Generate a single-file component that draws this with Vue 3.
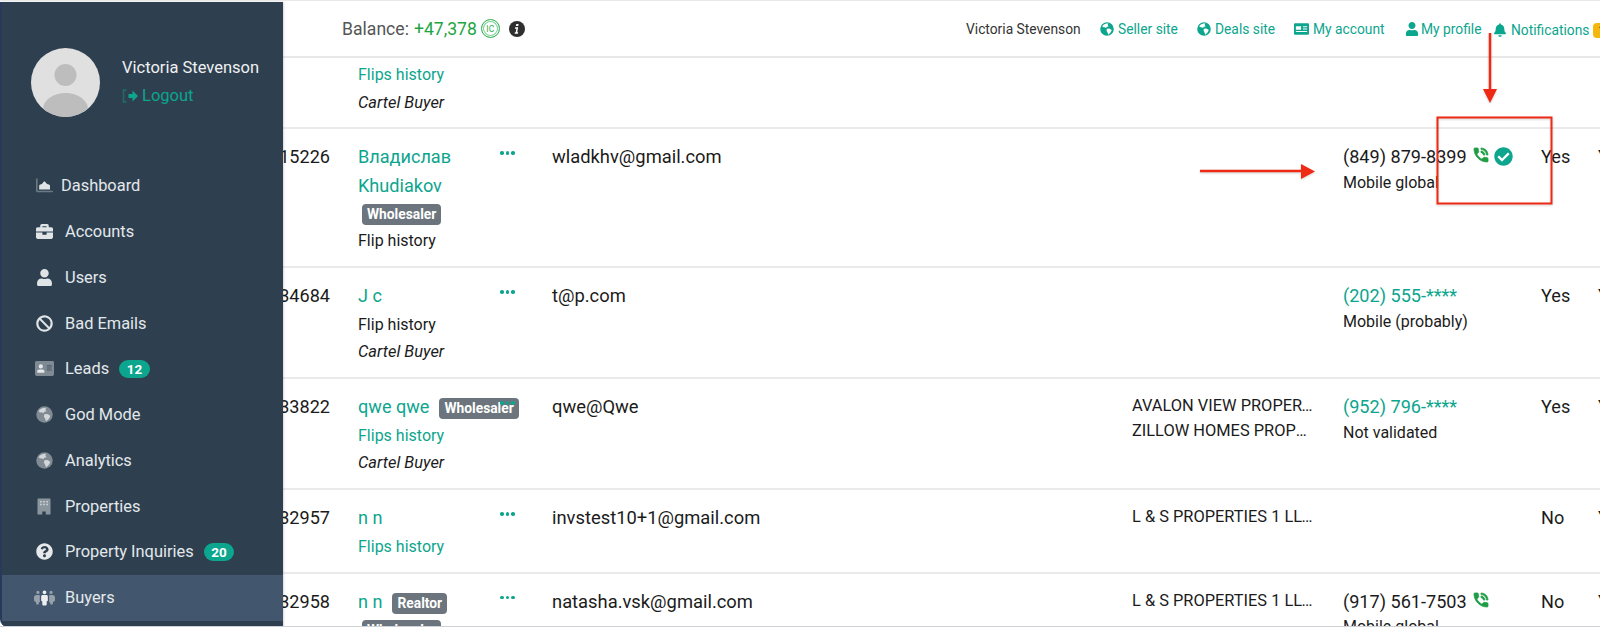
<script setup>
const DIM = '#7f8a93'
const BRIGHT = '#e0e4e7'
const landD = 'M110 115C160 70 240 45 305 58l-25 52 40 50-70 12-30 48-50-30-50 5-40-40zM250 250l90-10 90 50-30 80-60 60-40 40-20-80-40-70z'
const sideGlobe = { vb: '0 0 512 512', layers: [
  { d: 'M256 8a248 248 0 1 1 0 496 248 248 0 0 1 0-496z', c: DIM },
  { d: landD, c: '#d3d7da' }
] }
const linkGlobe = { vb: '0 0 512 512', fr: 'evenodd', d: 'M256 8a248 248 0 1 1 0 496 248 248 0 0 1 0-496z' + landD }
const user = { vb: '0 0 448 512', d: 'M224 256c70.7 0 128-57.3 128-128S294.7 0 224 0 96 57.3 96 128s57.3 128 128 128zm89.6 32h-16.7c-22.2 10.2-46.9 16-72.9 16s-50.6-5.8-72.9-16h-16.7C60.2 288 0 348.2 0 422.4V464c0 26.5 21.5 48 48 48h352c26.5 0 48-21.5 48-48v-41.6c0-74.2-60.2-134.4-134.4-134.4z' }

const nav = [
  { label: 'Dashboard', tight: true, icon: { vb: '0 0 512 440', layers: [
    { d: 'M0 24C0 11 11 0 24 0s24 11 24 24v352h440c13 0 24 11 24 24s-11 24-24 24H48c-26 0-48-22-48-48V24z', c: '#6d7a86' },
    { d: 'M96 340V230c0-20 14-36 34-42l50-16 52-66c10-12 30-12 40 0l60 66 56 18c20 6 34 24 34 44v106H96z', c: BRIGHT }
  ] } },
  { label: 'Accounts', icon: { vb: '0 0 512 512', layers: [{ c: BRIGHT, d: 'M320 336c0 8.840-7.160 16-16 16h-96c-8.840 0-16-7.160-16-16v-48H0v144c0 25.600 22.400 48 48 48h416c25.600 0 48-22.400 48-48V288H320v48zm144-208h-80V80c0-25.600-22.400-48-48-48H176c-25.600 0-48 22.400-48 48v48H48c-25.600 0-48 22.400-48 48v80h512v-80c0-25.600-22.400-48-48-48zm-144 0H192V96h128v32z' }] } },
  { label: 'Users', icon: { vb: user.vb, layers: [{ c: BRIGHT, d: user.d }] } },
  { label: 'Bad Emails', icon: { vb: '0 0 512 512', layers: [{ c: BRIGHT, d: 'M256 8C119 8 8 119 8 256s111 248 248 248 248-111 248-248S393 8 256 8zm130 116c65 65 70 166 17 237L151 109c71-53 172-48 235 15zM126 388c-65-65-70-166-17-237l252 252c-71 53-172 48-235-15z' }] } },
  { label: 'Leads', badge: '12', wide: true, icon: { vb: '0 0 576 448', layers: [
    { c: DIM, d: 'M48 0h480c26.500 0 48 21.500 48 48v352c0 26.500-21.500 48-48 48H48c-26.500 0-48-21.500-48-48V48C0 21.500 21.500 0 48 0z' },
    { c: '#e6e9eb', d: 'M176 96a64 64 0 1 1 0 128 64 64 0 0 1 0-128zM134 252h84c39 0 70 27 70 60v20c0 11-10 20-22 20H86c-12 0-22-9-22-20v-20c0-33 31-60 70-60z' },
    { c: '#49586a', d: 'M360 128h144v32H360zM360 192h144v32H360zM360 256h144v32H360z' }
  ] } },
  { label: 'God Mode', icon: sideGlobe },
  { label: 'Analytics', icon: sideGlobe },
  { label: 'Properties', small: true, icon: { vb: '0 0 448 512', layers: [
    { c: '#8b959d', d: 'M40 0h368c13 0 24 11 24 24v488H280v-88c0-7-5-12-12-12h-88c-7 0-12 5-12 12v88H16V24C16 11 27 0 40 0z' },
    { c: '#d5d9dc', d: 'M100 80h48v48h-48zM200 80h48v48h-48zM300 80h48v48h-48zM100 170h48v48h-48zM200 170h48v48h-48zM300 170h48v48h-48z' }
  ] } },
  { label: 'Property Inquiries', badge: '20', icon: { vb: '0 0 512 512', layers: [{ c: '#e6e8ea', d: 'M504 256c0 136.997-111.043 248-248 248S8 392.997 8 256C8 119.083 119.043 8 256 8s248 111.083 248 248zM262.655 90c-54.497 0-89.255 22.957-116.549 63.758-3.536 5.286-2.353 12.415 2.715 16.258l34.699 26.310c5.205 3.947 12.621 3.008 16.665-2.122 17.864-22.658 30.113-35.797 57.303-35.797 20.429 0 45.698 13.148 45.698 32.958 0 14.976-12.363 22.667-32.534 33.976C247.128 238.528 216 254.941 216 296v4c0 6.627 5.373 12 12 12h56c6.627 0 12-5.373 12-12v-1.333c0-28.462 83.186-29.647 83.186-106.667 0-58.002-60.165-102-116.531-102zM256 338c-25.365 0-46 20.635-46 46 0 25.364 20.635 46 46 46s46-20.636 46-46c0-25.365-20.635-46-46-46z' }] } },
  { label: 'Buyers', active: true, wider: true, icon: { vb: '0 0 640 512', layers: [
    { c: '#96a0a9', d: 'M120 50a50 50 0 1 1 0 100 50 50 0 0 1 0-100zm400 0a50 50 0 1 1 0 100 50 50 0 0 1 0-100zM76 176h78c18 0 28 10 26 26-1 10-2 16-2 26v130c0 14 4 26 10 36-8 6-18 10-30 10h-10v40c0 12-10 22-22 22H86c-12 0-22-10-22-22v-52C30 380 0 360 0 330v-74c0-44 34-80 76-80zm410 0h78c42 0 76 36 76 80v74c0 30-30 50-64 62v52c0 12-10 22-22 22h-40c-12 0-22-10-22-22v-40h-10c-12 0-22-4-30-10 6-10 10-22 10-36V228c0-10-1-16-2-26-2-16 8-26 26-26z' },
    { c: '#eceef0', d: 'M320 40a58 58 0 1 1 0 116 58 58 0 0 1 0-116zM262 180h116c24 0 44 20 44 44v120c0 14-10 24-24 24h-10v104c0 14-10 24-24 24h-88c-14 0-24-10-24-24V368h-10c-14 0-24-10-24-24V224c0-24 20-44 44-44z' }
  ] } }
]

const links = [
  { label: 'Seller site', icon: linkGlobe, cls: 'l-site' },
  { label: 'Deals site', icon: linkGlobe, cls: 'l-site' },
  { label: 'My account', icon: { vb: '0 0 576 448', fr: 'evenodd', d: 'M528 0H48C21.500 0 0 21.500 0 48v352c0 26.500 21.500 48 48 48h480c26.500 0 48-21.500 48-48V48c0-26.500-21.500-48-48-48zM72 120h200v130H72V120zm272 0h160v40H344v-40zm0 80h160v40H344v-40zM72 300h432v40H72v-40z' }, cls: 'l-acct' },
  { label: 'My profile', icon: user, cls: 'l-prof' }
]

const rows = [
  { id: '', lines: [{ t: 'Flips history', c: 'link' }, { t: 'Cartel Buyer', c: 'em' }], first: true },
  { id: '15226', name: 'Владислав Khudiakov', badges: [{ t: 'Wholesaler', c: 'under' }], lines: [{ t: 'Flip history' }], email: 'wladkhv@gmail.com', phone: '(849) 879-8399', call: true, ok: true, pnote: 'Mobile global', yes: 'Yes' },
  { id: '34684', name: 'J c', lines: [{ t: 'Flip history' }, { t: 'Cartel Buyer', c: 'em' }], email: 't@p.com', phone: '(202) 555-****', masked: true, pnote: 'Mobile (probably)', yes: 'Yes' },
  { id: '33822', name: 'qwe qwe', nowrap: true, badges: [{ t: 'Wholesaler', c: 'beside' }], lines: [{ t: 'Flips history', c: 'link' }, { t: 'Cartel Buyer', c: 'em' }], email: 'qwe@Qwe', companies: ['AVALON VIEW PROPERTIES LLC', 'ZILLOW HOMES PROPERTY LLC'], phone: '(952) 796-****', masked: true, pnote: 'Not validated', yes: 'Yes' },
  { id: '32957', name: 'n n', lines: [{ t: 'Flips history', c: 'link' }], email: 'invstest10+1@gmail.com', companies: ['L & S PROPERTIES 1 LLC INVEST'], yes: 'No' },
  { id: '32958', name: 'n n', badges: [{ t: 'Realtor', c: 'beside' }, { t: 'Wholesaler', c: 'under' }], lines: [], email: 'natasha.vsk@gmail.com', companies: ['L & S PROPERTIES 1 LLC INVEST'], phone: '(917) 561-7503', call: true, pnote: 'Mobile global', yes: 'No' }
]
</script>

<template>
  <div class="page">
    <main class="main">
      <header class="top">
        <div class="balance">
          <span>Balance:</span>
          <span class="amount">+47,378</span>
          <span class="coin"><span>IC</span></span>
          <svg class="info" viewBox="0 0 16 16"><circle cx="8" cy="8" r="8" fill="#2f2f2f" /><path d="M7.300 3h2.300l-.4 2.100H6.900zM6.200 6.300h3l-1 5h1l-.3 1.500H5.600l.3-1.500h.8l.7-3.500h-1.500z" fill="#fff" /></svg>
        </div>
        <nav class="toplinks">
          <span class="who">Victoria Stevenson</span>
          <a v-for="l in links" :key="l.label" class="tlink" :class="l.cls">
            <svg class="ticon" :viewBox="l.icon.vb"><path :d="l.icon.d" :fill-rule="l.icon.fr || 'nonzero'" fill="currentColor" /></svg>
            {{ l.label }}
          </a>
          <a class="tlink notif">
            <svg class="ticon bell" viewBox="0 0 448 512"><path fill="currentColor" d="M224 512c35.320 0 63.970-28.650 63.970-64H160.030c0 35.350 28.650 64 63.970 64zm215.390-149.710c-19.320-20.760-55.470-51.990-55.470-154.290 0-77.700-54.480-139.900-127.940-155.160V32c0-17.670-14.320-32-31.980-32s-31.980 14.330-31.980 32v20.840C118.560 68.100 64.080 130.300 64.080 208c0 102.300-36.150 133.530-55.470 154.290-6 6.450-8.660 14.160-8.610 21.710.11 16.400 12.980 32 32.100 32h383.800c19.120 0 32-15.600 32.100-32 .05-7.550-2.610-15.270-8.610-21.710z" /></svg>
            Notifications
            <span class="nbadge">1</span>
          </a>
        </nav>
      </header>

      <div v-for="(r, i) in rows" :key="i" class="row" :class="{ first: r.first }">
        <div class="c-id">{{ r.id }}</div>
        <div class="c-name" :class="{ nowrap: r.nowrap }">
          <a v-if="r.name" class="name">{{ r.name }}</a>
          <span v-for="b in r.badges" :key="b.t" class="tag" :class="b.c">{{ b.t }}</span>
          <div v-for="l in r.lines" :key="l.t" :class="l.c">{{ l.t }}</div>
        </div>
        <div class="c-dots"><span v-if="r.name" class="dots"><i></i><i></i><i></i></span></div>
        <div class="c-mail">{{ r.email }}</div>
        <div class="c-comp">
          <div v-for="c in r.companies" :key="c" class="comp">{{ c }}</div>
        </div>
        <div class="c-phone">
          <div v-if="r.phone" class="pline">
            <span :class="{ link: r.masked }">{{ r.phone }}</span>
            <svg v-if="r.call" class="call" viewBox="3 3 18 18"><path fill="#1f9d45" stroke="#1f9d45" stroke-width="1" d="M20 15.500c-1.250 0-2.450-.2-3.570-.57-.35-.11-.74-.03-1.020.24l-2.200 2.200c-2.830-1.440-5.150-3.750-6.590-6.590l2.200-2.210c.28-.26.360-.65.250-1C8.700 6.450 8.500 5.250 8.500 4c0-.55-.45-1-1-1H4c-.55 0-1 .45-1 1 0 9.390 7.610 17 17 17 .55 0 1-.45 1-1v-3.500c0-.55-.45-1-1-1zM19 12h2c0-4.970-4.030-9-9-9v2c3.870 0 7 3.130 7 7zm-4 0h2c0-2.760-2.240-5-5-5v2c1.660 0 3 1.340 3 3z" /></svg>
            <svg v-if="r.ok" class="ok" viewBox="0 0 512 512"><path fill="#0da58e" d="M504 256c0 136.967-111.033 248-248 248S8 392.967 8 256 119.033 8 256 8s248 111.033 248 248zM227.314 387.314l184-184c6.248-6.248 6.248-16.379 0-22.627l-22.627-22.627c-6.248-6.249-16.379-6.249-22.628 0L216 308.118l-70.059-70.059c-6.248-6.248-16.379-6.248-22.628 0l-22.627 22.627c-6.248 6.248-6.248 16.379 0 22.627l104 104c6.249 6.249 16.379 6.249 22.628.001z" /></svg>
          </div>
          <div v-if="r.pnote" class="pnote">{{ r.pnote }}</div>
        </div>
        <div class="c-yes">{{ r.yes }}</div>
        <div class="c-last">{{ r.yes ? 'Yes' : '' }}</div>
      </div>
    </main>

    <aside class="side">
      <div class="profile">
        <svg class="avatar" viewBox="0 0 69 69">
          <clipPath id="av"><circle cx="34.500" cy="34.500" r="34.500" /></clipPath>
          <circle cx="34.500" cy="34.500" r="34.500" fill="#e0e0e0" />
          <g clip-path="url(#av)" fill="#bdbdbd">
            <circle cx="34.500" cy="27" r="11" />
            <ellipse cx="34.500" cy="61" rx="22.500" ry="16" />
          </g>
        </svg>
        <div class="pinfo">
          <div class="pname">Victoria Stevenson</div>
          <a class="logout">
            <svg class="lout" viewBox="0 0 16 14"><path d="M4 1H1v12h3" fill="none" stroke="#1f6f68" stroke-width="1.500" /><path d="M6 5h4V1.500L15.500 7 10 12.500V9H6z" fill="#0da58e" /></svg>
            Logout
          </a>
        </div>
      </div>
      <ul class="menu">
        <li v-for="n in nav" :key="n.label" class="item" :class="{ active: n.active }">
          <span class="ico" :class="{ tight: n.tight }">
            <svg :class="{ wide: n.wide, wider: n.wider, small: n.small }" :viewBox="n.icon.vb"><path v-for="p in n.icon.layers" :key="p.d" :d="p.d" :fill="p.c" /></svg>
          </span>
          <span class="lab">{{ n.label }}</span>
          <span v-if="n.badge" class="pill">{{ n.badge }}</span>
        </li>
      </ul>
    </aside>

    <svg class="marks" viewBox="0 0 1600 627" width="1600" height="627">
      <g fill="none" stroke="#ee2a14" stroke-width="2.500">
        <path d="M1490 33V90" />
        <path d="M1200 171H1302" />
      </g>
      <path d="M1483 89h14l-7 14zM1301 164v15l14-7.500z" fill="#ee2a14" />
      <rect x="1437.500" y="117.500" width="114" height="86" fill="none" stroke="#ee2a14" stroke-width="2" />
    </svg>
  </div>
</template>

<style>
html, body { margin: 0; background: #fff; overflow: hidden; }
</style>

<style scoped>
* { box-sizing: border-box; }
.page { position: relative; width: 1600px; height: 627px; overflow: hidden; font-family: Roboto, "Noto Sans", sans-serif; color: #1b1b1b; background: #fff; border-top: 1px solid #e8e8e8; border-bottom: 1px solid #cfd2d6; }
.main { width: 1600px; }

.top { height: 57px; display: flex; align-items: center; padding-left: 342px; border-bottom: 2px solid #e6e8ea; }
.balance { display: flex; align-items: center; font-size: 17.600px; color: #555; gap: 5px; }
.amount { color: #1ea53f; }
.coin { width: 19px; height: 19px; border: 1px solid #2cae50; border-radius: 50%; display: flex; align-items: center; justify-content: center; color: #2cae50; font-size: 8.500px; box-shadow: inset 0 0 0 1px #fff, inset 0 0 0 2px #7fd198; margin-left: -1px; }
.info { width: 16px; height: 16px; margin-left: 4px; }
.toplinks { margin-left: auto; display: flex; align-items: center; font-size: 13.800px; white-space: nowrap; width: 634px; flex: none; }
.toplinks > * { flex: none; }
.who { color: #333; width: 134px; }
.tlink { color: #0ca58e; display: flex; align-items: center; gap: 4px; }
.ticon { height: 14px; width: 14px; }
.l-site { width: 97px; }
.l-acct { width: 111px; }
.l-acct .ticon { width: 15px; }
.l-prof { width: 89px; gap: 2px; }
.notif { margin-top: 3px; gap: 5px; }
.bell { width: 12px; }
.nbadge { background: #f5b60d; color: #5b4300; width: 16px; height: 15px; border-radius: 4px; font-size: 11px; text-align: center; line-height: 15px; margin-left: -1px; }

.row { display: grid; grid-template-columns: 358px 142px 52px 580px 211px 198px 57px 2px; border-bottom: 2px solid #e8eaec; padding: 14px 0 11.500px; font-size: 18.100px; line-height: 27.500px; }
.row.first { padding: 3px 0 11px; }
.c-id { text-align: right; white-space: nowrap; padding-right: 28px; }
.c-name { font-size: 16px; position: relative; }
.c-name.nowrap { white-space: nowrap; }
.name { font-size: 18.100px; color: #0ca58e; }
.link { color: #0ca58e; }
.em { font-style: italic; font-size: 16.400px; }
.tag { display: inline-block; background: #6c757d; color: #fff; font-weight: 700; font-size: 13.800px; line-height: 21px; padding: 0 5px; border-radius: 4px; vertical-align: 0; }
.tag.beside { margin-left: 10px; }
.tag.under { display: table; margin: 3.500px 0 2.500px 4px; }
.c-dots { position: relative; z-index: 1; }
.dots { display: flex; gap: 2px; padding-top: 8px; }
.dots i { width: 3.500px; height: 3.500px; border-radius: 50%; background: #0ca58e; }
.c-mail { white-space: nowrap; font-size: 18.350px; }
.c-comp { font-size: 16.400px; line-height: 25px; min-width: 0; }
.comp { width: 182px; white-space: nowrap; overflow: hidden; text-overflow: ellipsis; }
.pline { display: flex; align-items: flex-start; white-space: nowrap; height: 27.500px; }
.pnote { font-size: 16px; line-height: 24px; white-space: nowrap; }
.call { width: 14px; height: 14px; margin: 5px 0 0 7px; overflow: visible; }
.ok { width: 19px; height: 19px; margin: 4px 0 0 6px; }
.c-last { white-space: nowrap; width: 2px; overflow: visible; }

.side { position: absolute; left: 0; top: 1px; width: 283px; height: 625px; background: #2e4050; border-left: 2px solid #283a5c; border-bottom-left-radius: 8px; box-shadow: 1px 0 2px rgba(0, 0, 0, .15); overflow: hidden; color: #e4e8eb; }
.profile { display: flex; gap: 22px; padding: 46px 0 0 29px; height: 161px; }
.avatar { width: 69px; height: 69px; flex: none; }
.pinfo { padding-top: 10px; }
.pname { font-size: 16.500px; line-height: 20px; color: #eef0f2; white-space: nowrap; }
.logout { display: flex; align-items: center; gap: 3px; margin-top: 8px; font-size: 16.500px; line-height: 20px; color: #0ca58e; }
.lout { width: 17px; height: 14px; }
.menu { list-style: none; margin: 0; padding: 0; }
.item { height: 45.750px; display: flex; align-items: center; padding-left: 34px; font-size: 16.400px; }
.item.active { background: #42576e; }
.ico { width: 29px; display: flex; align-items: center; flex: none; }
.ico.tight { width: 25px; }
.ico svg { width: 17px; height: 17px; display: block; }
.ico svg.wide { width: 19px; margin-left: -1px; }
.ico svg.wider { width: 21px; margin-left: -2px; }
.ico svg.small { width: 14px; height: 17px; margin-left: 1px; }
.pill { margin-left: 10px; background: #0ca58e; color: #fff; font-size: 13.500px; font-weight: 700; height: 18px; line-height: 18px; padding: 0 7.500px; border-radius: 9px; }
.marks { position: absolute; left: 0; top: -1px; pointer-events: none; filter: drop-shadow(0 1px 1px rgba(0,0,0,.18)); }
</style>
